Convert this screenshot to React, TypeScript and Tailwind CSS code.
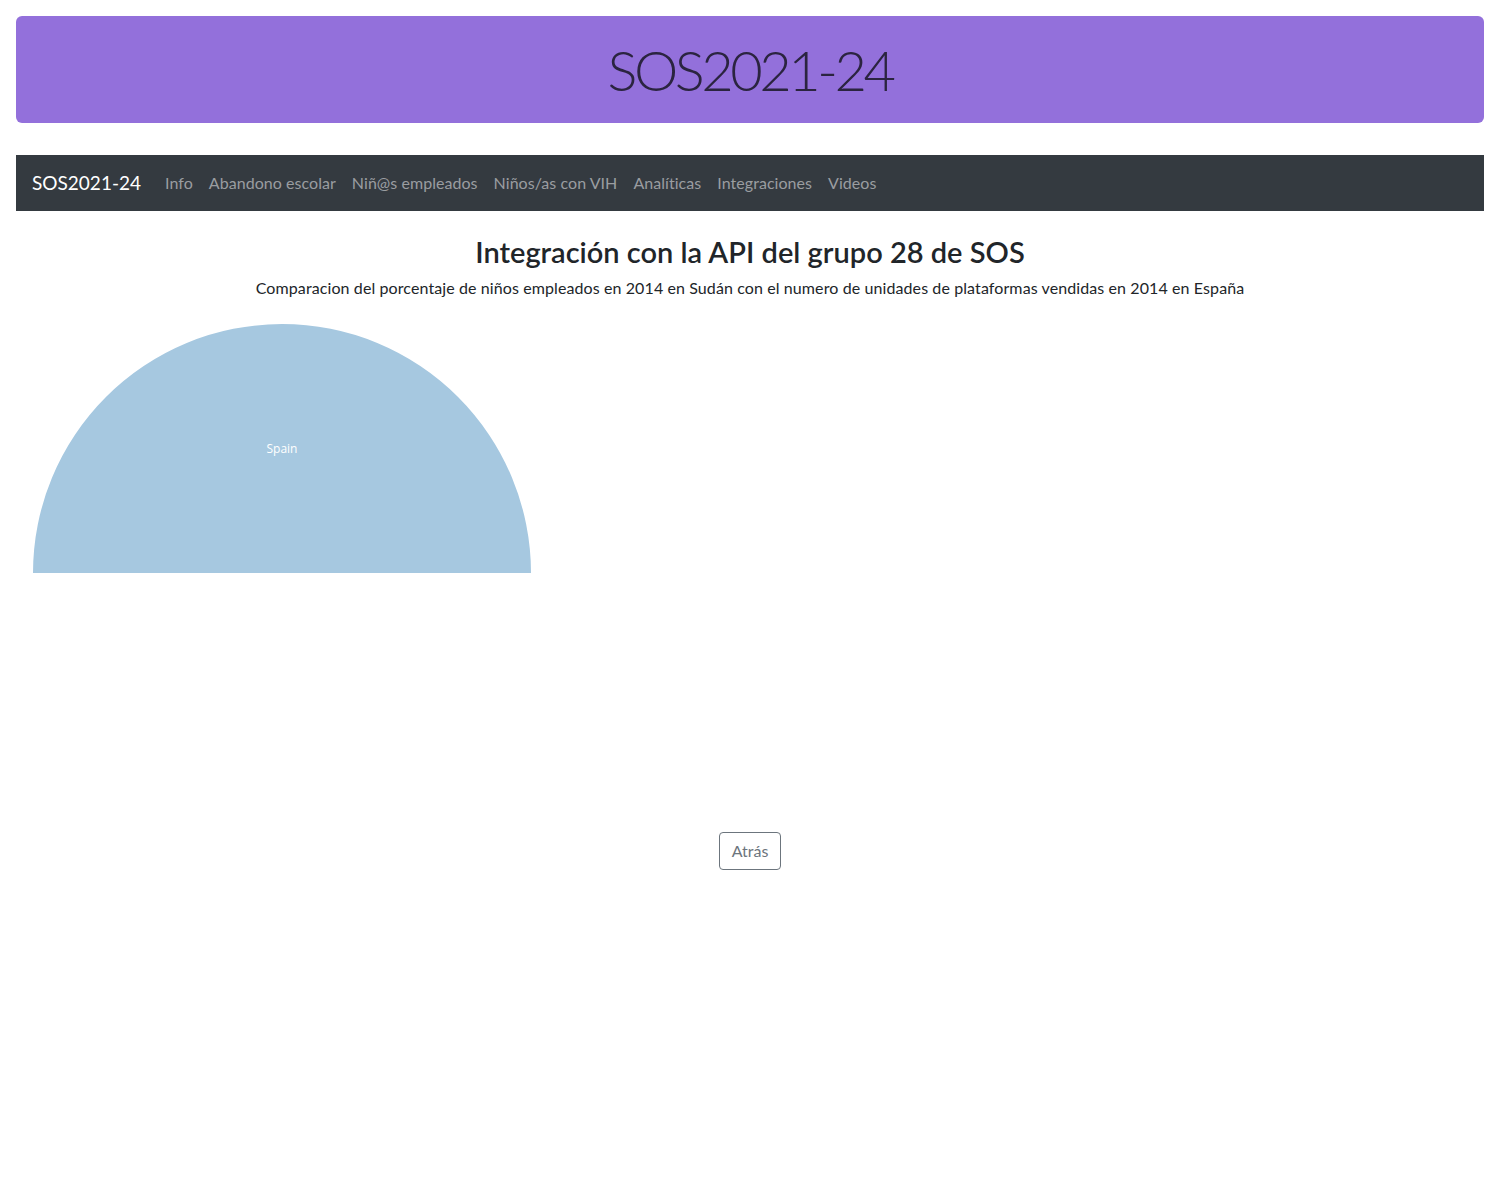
import React from 'react';

const links = ['Info', 'Abandono escolar', 'Niñ@s empleados', 'Niños/as con VIH', 'Analíticas', 'Integraciones', 'Videos'];

// Gráfico de medio donut con un único valor (Spain)
const HalfPie = () => (
  <svg width="520" height="260" viewBox="0 0 520 260" className="block">
    <path d="M 11 258 A 249 249 0 0 1 509 258 Z" fill="#a6c8e0" />
    <text x="260" y="138" textAnchor="middle" fill="#ffffff" fontSize="12" fontFamily="'Open Sans', sans-serif">
      Spain
    </text>
  </svg>
);

export default function App() {
  return (
    <div className="min-h-[1200px] bg-white p-4 text-[#212529]" style={{ fontFamily: "Lato, 'Open Sans', sans-serif" }}>
      <div className="rounded-md bg-[#9370db] py-[17px] text-center">
        <h1 className="text-[56px] leading-[73px] font-light tracking-[-3.5px] text-[#2b2440]">SOS2021-24</h1>
      </div>

      <nav className="mt-8 flex h-14 items-center bg-[#343a40] px-4">
        <span className="mr-4 text-[19px] text-white">SOS2021-24</span>
        <ul className="flex items-center">
          {links.map(l => (
            <li key={l} className="px-2 text-[16px] tracking-[0.05px] text-[#9a9da0]">{l}</li>
          ))}
        </ul>
      </nav>

      <div className="mt-6 text-center">
        <h3 className="text-[29px] leading-[34px] font-semibold">Integración con la API del grupo 28 de SOS</h3>
        <p className="mt-[8px] text-[16px] leading-[22px] tracking-[0.1px]">
          Comparacion del porcentaje de niños empleados en 2014 en Sudán con el numero de unidades de plataformas vendidas en 2014 en España
        </p>
      </div>

      <div className="mt-[14px] h-[519px] pl-[6px] pt-[2px]">
        <HalfPie />
      </div>

      <div className="flex justify-center">
        <button className="h-[38px] rounded border border-[#6c757d] px-3 text-[16px] text-[#6c757d]">Atrás</button>
      </div>
    </div>
  );
}
